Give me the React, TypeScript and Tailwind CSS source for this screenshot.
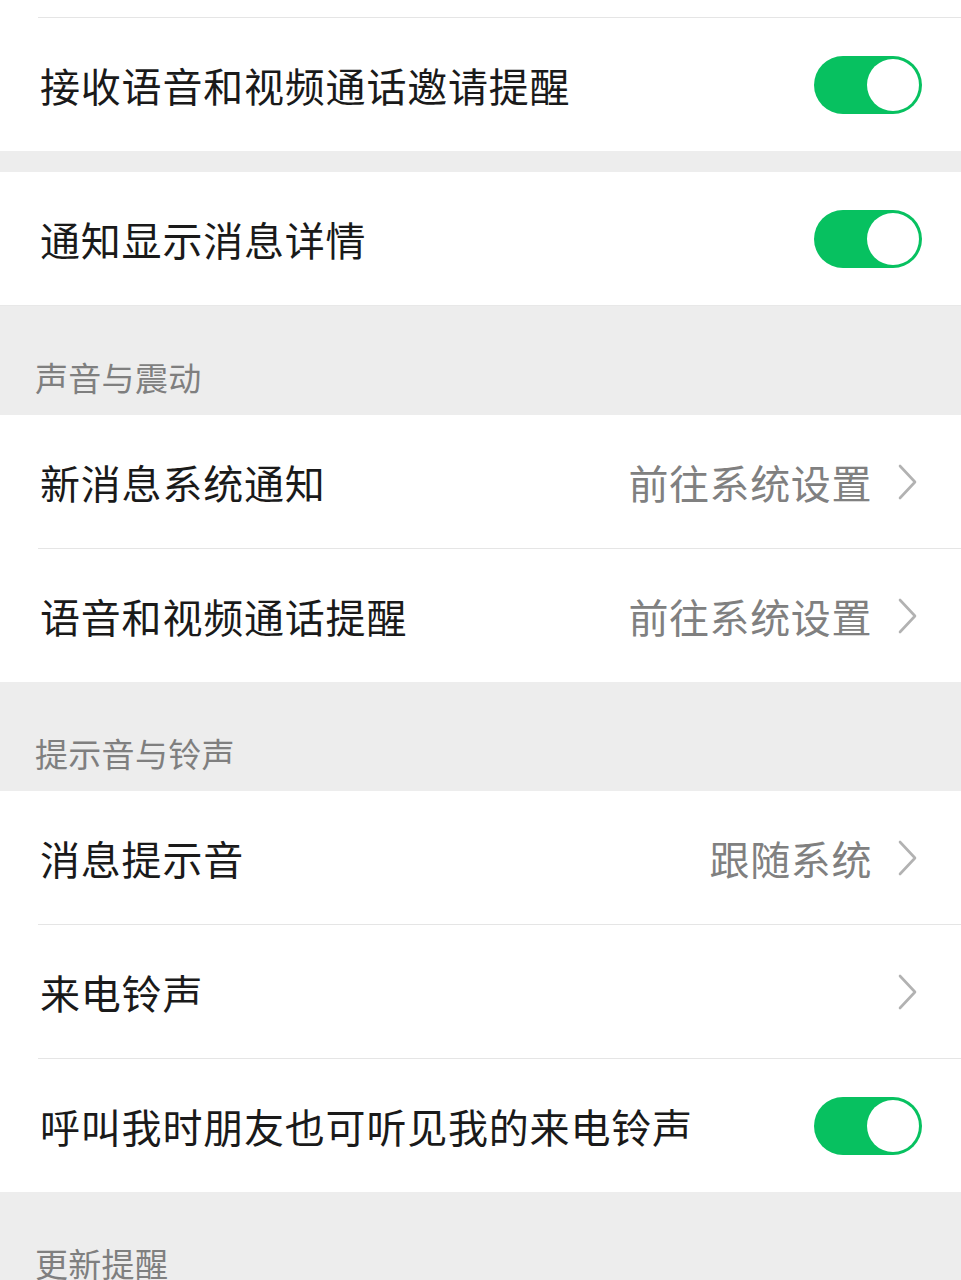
const font = { fontFamily: '"Noto Sans CJK SC", "Noto Sans", sans-serif' };

function Toggle() {
  return (
    <div className="flex h-[58px] w-[108px] items-center justify-end rounded-full bg-[#07c160] p-[3px]">
      <div className="h-[52px] w-[52px] rounded-full bg-white" />
    </div>
  );
}

function Chevron() {
  return (
    <svg width="20" height="36" viewBox="0 0 20 36" className="mr-[4px]">
      <polyline points="2,2 17,18 2,34" fill="none" stroke="#b2b2b2" strokeWidth="2.6" strokeLinecap="round" strokeLinejoin="round" />
    </svg>
  );
}

function Row({ label, value, toggle, arrow }: { label: string; value?: string; toggle?: boolean; arrow?: boolean }) {
  return (
    <div className="flex h-[133px] items-center justify-between bg-white pl-[40px] pr-[39px]">
      <span className="text-[40px] leading-none tracking-[0.8px] text-[#1a1a1a]">{label}</span>
      {toggle && <Toggle />}
      {arrow && (
        <div className="flex items-center">
          {value && <span className="mr-[26px] text-[40px] leading-none tracking-[0.6px] text-[#808080]">{value}</span>}
          <Chevron />
        </div>
      )}
    </div>
  );
}

function Divider() {
  return (
    <div className="bg-white pl-[38px]">
      <div className="h-px bg-[#e5e5e5]" />
    </div>
  );
}

function Header({ title }: { title: string }) {
  return (
    <div className="h-[109px] bg-[#ededed] pl-[35px] pt-[55px]">
      <span className="text-[33px] leading-none tracking-[0.3px] text-[#7f7f7f]">{title}</span>
    </div>
  );
}

export default function App() {
  return (
    <div className="min-h-[1280px] w-[961px] overflow-hidden bg-[#ededed]" style={font}>
      <div className="h-[17px] bg-white" />
      <Divider />
      <Row label="接收语音和视频通话邀请提醒" toggle />
      <div className="h-[21px] bg-[#ededed]" />
      <Row label="通知显示消息详情" toggle />
      <div className="h-px bg-[#e8e8e8]" />

      <Header title="声音与震动" />
      <Row label="新消息系统通知" value="前往系统设置" arrow />
      <Divider />
      <Row label="语音和视频通话提醒" value="前往系统设置" arrow />

      <Header title="提示音与铃声" />
      <Row label="消息提示音" value="跟随系统" arrow />
      <Divider />
      <Row label="来电铃声" arrow />
      <Divider />
      <Row label="呼叫我时朋友也可听见我的来电铃声" toggle />

      <Header title="更新提醒" />
    </div>
  );
}
